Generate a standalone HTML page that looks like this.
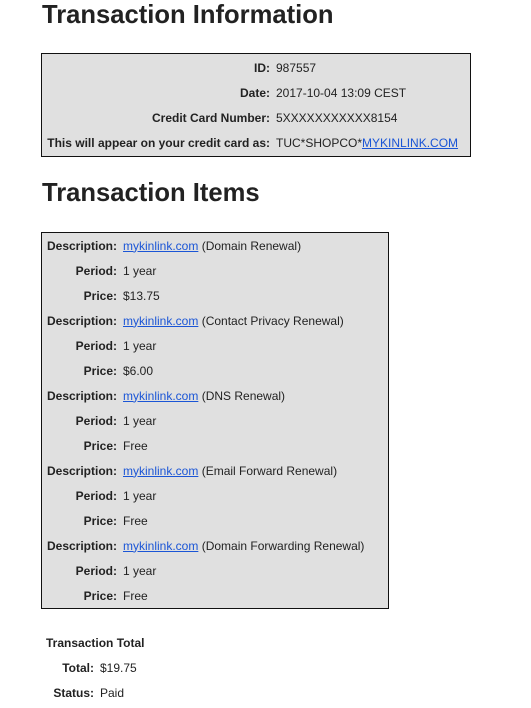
<!DOCTYPE html>
<html><head><style>
body{margin:0;background:#fff;font-family:"Liberation Sans",Arial,sans-serif;color:#222;font-size:12px;}
h1{position:absolute;left:42px;margin:0;font-size:25.6px;font-weight:bold;color:#222;}
.box{position:absolute;left:41px;border:1px solid #111;background:#e0e0e0;padding:1px 4px 1px 4px;box-sizing:border-box;}
table{border-collapse:collapse;}
td{height:25px;padding:0;white-space:nowrap;vertical-align:middle;}
td.l{text-align:right;font-weight:bold;padding-right:6px;}
a{color:#1a55d6;text-decoration:underline;}
</style></head><body>
<h1 style="top:1px">Transaction Information</h1>
<div class="box" style="top:53px;width:430px;height:104px;">
<table>
<tr><td class="l" style="width:224px">ID:</td><td>987557</td></tr>
<tr><td class="l">Date:</td><td>2017-10-04 13:09 CEST</td></tr>
<tr><td class="l">Credit Card Number:</td><td>5XXXXXXXXXXX8154</td></tr>
<tr><td class="l">This will appear on your credit card as:</td><td>TUC*SHOPCO*<a>MYKINLINK.COM</a></td></tr>
</table></div>
<h1 style="top:179px">Transaction Items</h1>
<div class="box" style="top:232px;width:348px;height:377px;padding-top:0">
<table>
<tr><td class="l" style="width:71px">Description:</td><td><a>mykinlink.com</a> (Domain Renewal)</td></tr>
<tr><td class="l">Period:</td><td>1 year</td></tr>
<tr><td class="l">Price:</td><td>$13.75</td></tr>
<tr><td class="l">Description:</td><td><a>mykinlink.com</a> (Contact Privacy Renewal)</td></tr>
<tr><td class="l">Period:</td><td>1 year</td></tr>
<tr><td class="l">Price:</td><td>$6.00</td></tr>
<tr><td class="l">Description:</td><td><a>mykinlink.com</a> (DNS Renewal)</td></tr>
<tr><td class="l">Period:</td><td>1 year</td></tr>
<tr><td class="l">Price:</td><td>Free</td></tr>
<tr><td class="l">Description:</td><td><a>mykinlink.com</a> (Email Forward Renewal)</td></tr>
<tr><td class="l">Period:</td><td>1 year</td></tr>
<tr><td class="l">Price:</td><td>Free</td></tr>
<tr><td class="l">Description:</td><td><a>mykinlink.com</a> (Domain Forwarding Renewal)</td></tr>
<tr><td class="l">Period:</td><td>1 year</td></tr>
<tr><td class="l">Price:</td><td>Free</td></tr>
</table></div>
<div style="position:absolute;left:46px;top:630px;">
<table>
<tr><td colspan="2" style="font-weight:bold">Transaction Total</td></tr>
<tr><td class="l" style="width:48px">Total:</td><td>$19.75</td></tr>
<tr><td class="l">Status:</td><td>Paid</td></tr>
</table></div>
</body></html>
